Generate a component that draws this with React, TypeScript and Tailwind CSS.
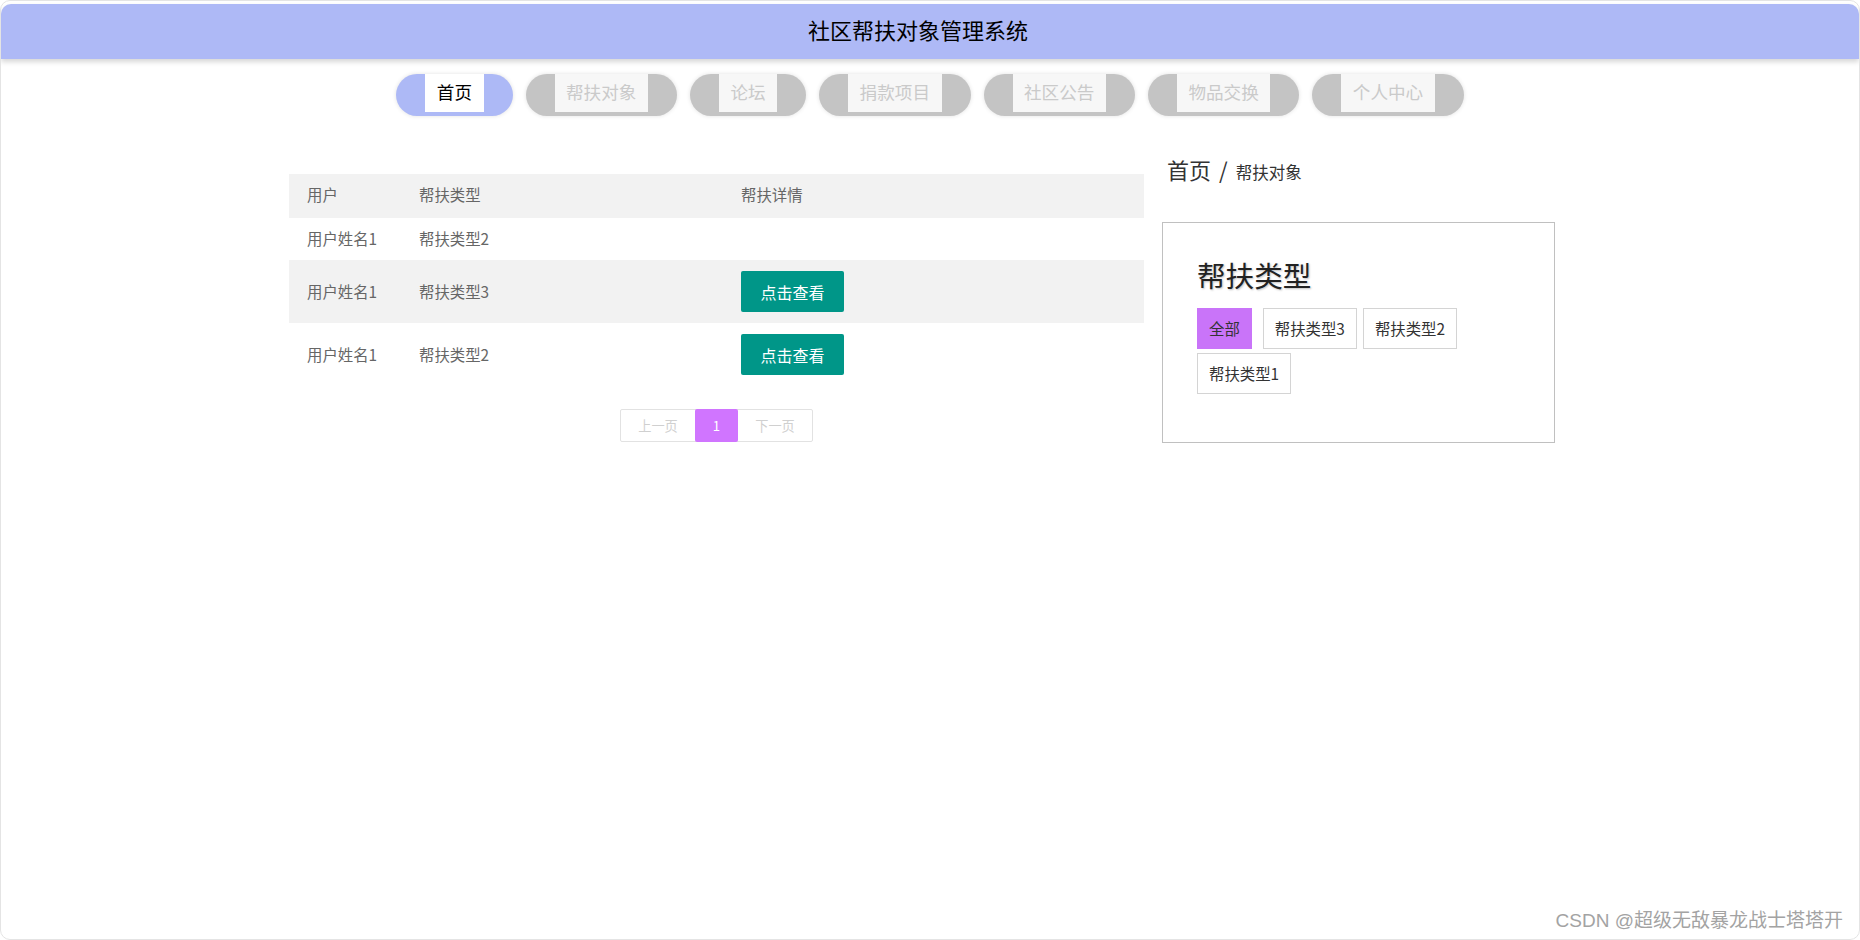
const navItems = ["首页", "帮扶对象", "论坛", "捐款项目", "社区公告", "物品交换", "个人中心"];

const rows = [
  { user: "用户姓名1", type: "帮扶类型2", detail: false },
  { user: "用户姓名1", type: "帮扶类型3", detail: true },
  { user: "用户姓名1", type: "帮扶类型2", detail: true },
];

const tags = ["全部", "帮扶类型3", "帮扶类型2", "帮扶类型1"];

const App = () => {
  return (
    <div className="relative w-full h-[940px] bg-white pt-[3px] border border-[#e4e4e4] rounded-[10px] overflow-hidden font-['Noto_Sans_CJK_SC',sans-serif]">
      {/* header */}
      <header className="h-[55px] bg-[#aeb9f6] rounded-t-[10px] shadow-[0_3px_5px_rgba(0,0,0,0.16)] flex items-center justify-center pr-[24px] pb-[6px]">
        <h1 className="text-[22px] leading-[30px] text-black font-normal">社区帮扶对象管理系统</h1>
      </header>

      {/* nav */}
      <nav className="mt-[15px] flex justify-center gap-[13px]">
        {navItems.map((item, i) => (
          <div
            key={item}
            className={`h-[42px] px-[29px] pb-[4px] rounded-full shadow-[0_0_4px_rgba(0,0,0,0.12)] ${
              i === 0 ? "bg-[#adb9f6]" : "bg-[#c4c4c4]"
            }`}
          >
            <div
              className={`h-[38px] px-[11.5px] pb-[2px] flex items-center text-[17.6px] leading-none ${
                i === 0 ? "bg-white text-black" : "bg-[#f7f7f7] text-[#cacaca]"
              }`}
            >
              {item}
            </div>
          </div>
        ))}
      </nav>

      {/* content */}
      <div className="mt-[37px] flex pl-[288px]">
        <div className="w-[855px] pt-[21px]">
          <table className="w-full text-[15.4px] text-[#666] border-collapse">
            <thead>
              <tr className="bg-[#f2f2f2] h-[44px]">
                <th className="w-[112px] pl-[18px] pb-[2px] text-left font-normal">用户</th>
                <th className="w-[322px] pl-[18px] pb-[2px] text-left font-normal">帮扶类型</th>
                <th className="pl-[18px] pb-[2px] text-left font-normal">帮扶详情</th>
              </tr>
            </thead>
            <tbody>
              {rows.map((row, i) => (
                <tr key={i} className={`${row.detail ? "h-[63px]" : "h-[42px]"} ${i === 1 ? "bg-[#f2f2f2]" : ""}`}>
                  <td className="pl-[18px]">{row.user}</td>
                  <td className="pl-[18px]">{row.type}</td>
                  <td className="pl-[18px]">
                    {row.detail && (
                      <button className="h-[41px] w-[103px] bg-[#009688] text-white text-[16px] rounded-[2px] flex items-center justify-center">
                        点击查看
                      </button>
                    )}
                  </td>
                </tr>
              ))}
            </tbody>
          </table>

          <div className="mt-[23px] flex justify-center">
            <div className="flex h-[33px] border border-[#e2e2e2] rounded-[2px] text-[13.2px]">
              <span className="w-[74px] flex items-center justify-center text-[#d0d0d0]">上一页</span>
              <span className="w-[43px] -my-px flex items-center justify-center bg-[#d075ff] text-white rounded-[2px]">1</span>
              <span className="w-[74px] flex items-center justify-center text-[#d0d0d0]">下一页</span>
            </div>
          </div>
        </div>

        <aside className="ml-[18px] w-[393px]">
          <div className="flex items-baseline pl-[5px] text-[#333] leading-[33px]">
            <span className="text-[22px]">首页</span>
            <span className="text-[22px] mx-[8px]">/</span>
            <span className="text-[16.5px]">帮扶对象</span>
          </div>

          <div className="mt-[33px] h-[221px] border border-[#c0c0c0] pl-[34px] pr-[12px] pt-[32px]">
            <h2 className="text-[28.6px] leading-[40px] text-[#222] font-normal [text-shadow:1px_1px_2px_rgba(0,0,0,0.25)]">帮扶类型</h2>
            <div className="mt-[13px] flex flex-wrap gap-y-[4px]">
              {tags.map((tag, i) => (
                <span
                  key={tag}
                  className={`h-[41px] px-[11px] flex items-center text-[15.4px] text-[#333] ${
                    i === 0 ? "bg-[#c974f9] border border-[#c974f9] mr-[11px]" : "bg-white border border-[#d4d4d4] mr-[6px]"
                  }`}
                >
                  {tag}
                </span>
              ))}
            </div>
          </div>
        </aside>
      </div>

      <div className="absolute right-[16px] top-[907px] text-[19px] leading-[26px] text-[#a3a3a3] font-['Liberation_Sans','Noto_Sans_CJK_SC',sans-serif] [text-shadow:0_0_1px_rgba(255,255,255,0.8)]">
        CSDN @超级无敌暴龙战士塔塔开
      </div>
    </div>
  );
};

export default App;
